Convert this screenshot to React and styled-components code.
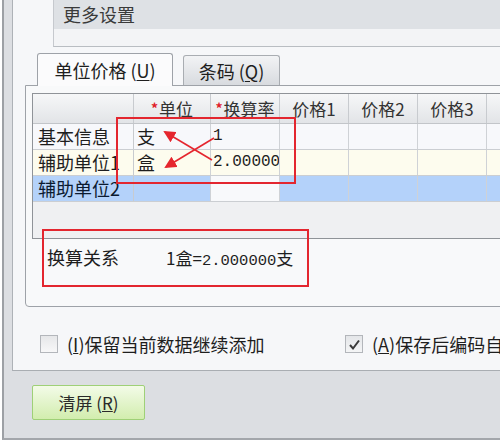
import styled, { createGlobalStyle } from 'styled-components'

const GlobalStyle = createGlobalStyle`
  html, body {
    margin: 0;
    padding: 0;
    background: #ffffff;
  }
  body {
    font-family: "Noto Sans CJK SC", "Liberation Sans", sans-serif;
    color: #1e1e1e;
  }
`

const columns = [
	{ key: 'unit', w: 77, title: '单位', required: true },
	{ key: 'rate', w: 69, title: '换算率', required: true },
	{ key: 'p1', w: 69, title: '价格1' },
	{ key: 'p2', w: 69, title: '价格2' },
	{ key: 'p3', w: 69, title: '价格3' },
	{ key: 'p4', w: 80, title: '' },
]

const rows = [
	{ name: '基本信息', bg: '#f7f8fb', unit: '支', rate: '1' },
	{ name: '辅助单位1', bg: '#fdfcee', unit: '盒', rate: '2.000000' },
	{ name: '辅助单位2', bg: '#b4d2fa', unit: '', rate: '', selected: true },
]

function App() {
	return (
		<S.Window>
			<GlobalStyle />
			<S.Frame>
				<S.Panel>
					<S.MoreBox>
						<S.MoreHeader>更多设置</S.MoreHeader>
					</S.MoreBox>

					<S.TabStrip>
						<S.Tab $active>
							单位价格 (<u>U</u>)
						</S.Tab>
						<S.Tab>
							条码 (<u>Q</u>)
						</S.Tab>
					</S.TabStrip>

					<S.TabPanel>
						<S.Grid>
							<S.HeadRow>
								<S.HeadCell $w={101} />
								{columns.map((c) => (
									<S.HeadCell key={c.key} $w={c.w}>
										{c.required && <S.Star>*</S.Star>}
										{c.title}
									</S.HeadCell>
								))}
							</S.HeadRow>
							{rows.map((r) => (
								<S.Row key={r.name} $bg={r.bg} $selected={r.selected}>
									<S.NameCell $w={101}>{r.name}</S.NameCell>
									{columns.map((c) => (
										<S.Cell
											key={c.key}
											$w={c.w}
											$mono={c.key === 'rate'}
											$plain={r.selected && c.key === 'rate'}
										>
											{r[c.key] || ''}
										</S.Cell>
									))}
								</S.Row>
							))}
						</S.Grid>

						<S.Summary>
							<S.SummaryLabel>换算关系</S.SummaryLabel>
							<S.SummaryValue>
								1盒=<S.Digits>2.000000</S.Digits>支
							</S.SummaryValue>
						</S.Summary>

						<S.Mark $left={90} $top={31} $w={180} $h={67} />
						<S.Mark $left={16} $top={143} $w={267} $h={58} />
						<S.Arrows width="260" height="120" viewBox="0 0 260 120">
							<defs>
								<marker
									id="head"
									viewBox="0 0 12 12"
									refX="10"
									refY="6"
									markerWidth="12"
									markerHeight="12"
									markerUnits="userSpaceOnUse"
									orient="auto"
								>
									<path d="M0 0 L12 6 L0 12 Z" fill="#e5262e" />
								</marker>
							</defs>
							<line x1="186" y1="74" x2="139" y2="46" stroke="#e5262e" strokeWidth="1.6" markerEnd="url(#head)" />
							<line x1="188" y1="52" x2="140" y2="81" stroke="#e5262e" strokeWidth="1.6" markerEnd="url(#head)" />
						</S.Arrows>
					</S.TabPanel>

					<S.CheckRow>
						<S.CheckItem $w={305}>
							<S.Box />
							<span>
								(<u>I</u>)保留当前数据继续添加
							</span>
						</S.CheckItem>
						<S.CheckItem>
							<S.Box $checked>
								<svg width="13" height="13" viewBox="0 0 13 13">
									<path d="M2 7 L5 10.5 L11 2.5" fill="none" stroke="#3a3a3a" strokeWidth="2" />
								</svg>
							</S.Box>
							<span>
								(<u>A</u>)保存后编码自动加一
							</span>
						</S.CheckItem>
					</S.CheckRow>
				</S.Panel>

				<S.Footer>
					<S.Button>
						清屏 (<u>R</u>)
					</S.Button>
				</S.Footer>
			</S.Frame>
		</S.Window>
	)
}

export default App

const Window = styled.div`
	width: 500px;
	height: 446px;
	overflow: hidden;
	background: #ffffff;
`

const Frame = styled.div`
	box-sizing: border-box;
	margin-left: 2px;
	width: 540px;
	height: 440px;
	padding-left: 8px;
	border-left: 2px solid #9da0a5;
	border-bottom: 2px solid #a3a6ab;
	background: #dcdee2;
	display: flex;
	flex-direction: column;
`

const Panel = styled.div`
	box-sizing: border-box;
	height: 371px;
	border-left: 1px solid #aeb2b7;
	border-bottom: 1px solid #a9adb2;
	background: #f6f7f9;
	display: flex;
	flex-direction: column;
`

const MoreBox = styled.div`
	box-sizing: border-box;
	margin-left: 40px;
	height: 47px;
	border-left: 1px solid #c6c9ce;
	border-bottom: 1px solid #b9bdc2;
	background: #f3f4f6;
`

const MoreHeader = styled.div`
	height: 29px;
	line-height: 29px;
	padding-left: 9px;
	background: #dee1e5;
	font-size: 18px;
	color: #3a3a3a;
`

const TabStrip = styled.div`
	display: flex;
	align-items: flex-end;
	gap: 10px;
	margin-top: 5px;
	padding-left: 24px;
	height: 33px;
	position: relative;
	z-index: 1;
`

const Tab = styled.div`
	box-sizing: border-box;
	width: ${(p) => (p.$active ? '136px' : '97px')};
	height: ${(p) => (p.$active ? '33px' : '30px')};
	margin-bottom: ${(p) => (p.$active ? '-1px' : '0')};
	border: 1px solid ${(p) => (p.$active ? '#9ea2a8' : '#a9adb2')};
	border-bottom: none;
	border-radius: 3px 3px 0 0;
	background: ${(p) =>
		p.$active ? '#fbfbfc' : 'linear-gradient(#f2f3f5, #d8dbdf)'};
	display: flex;
	align-items: center;
	justify-content: center;
	font-size: 18px;
	color: #1e1e1e;
	white-space: nowrap;
	u {
		text-underline-offset: 2px;
	}
`

const TabPanel = styled.div`
	box-sizing: border-box;
	position: relative;
	margin-left: 12px;
	height: 222px;
	padding: 7px 0 0 6px;
	border: 1px solid #9ea2a8;
	border-radius: 0 0 0 4px;
	background: #f8f9fa;
`

const Grid = styled.div`
	box-sizing: border-box;
	height: 146px;
	border: 1px solid #8f9398;
	background: #eff0f2;
	display: flex;
	flex-direction: column;
`

const HeadRow = styled.div`
	display: flex;
	height: 29px;
	border-bottom: 1px solid #c2c5c9;
	background: linear-gradient(#f6f7f8, #e2e4e7);
`

const HeadCell = styled.div`
	box-sizing: border-box;
	flex: 0 0 ${(p) => p.$w}px;
	border-right: 1px solid #c8cbcf;
	display: flex;
	align-items: center;
	justify-content: center;
	font-size: 17px;
	color: #333;
	white-space: nowrap;
`

const Star = styled.span`
	color: #e0202a;
	font-size: 14px;
	font-weight: bold;
	margin-right: 1px;
	position: relative;
	top: -1px;
`

const Row = styled.div`
	display: flex;
	height: 25px;
	border-bottom: 1px solid #cbced2;
	background: ${(p) => p.$bg};
	color: ${(p) => (p.$selected ? '#0b1a30' : '#1e1e1e')};
`

const NameCell = styled.div`
	box-sizing: border-box;
	flex: 0 0 ${(p) => p.$w}px;
	padding-left: 5px;
	border-right: 1px solid #c8cbcf;
	font-size: 18px;
	line-height: 25px;
	white-space: nowrap;
	overflow: hidden;
`

const Cell = styled.div`
	box-sizing: border-box;
	flex: 0 0 ${(p) => p.$w}px;
	padding-left: ${(p) => (p.$mono ? '2px' : '3px')};
	border-right: 1px solid #cfd2d6;
	background: ${(p) => (p.$plain ? '#f8f9fb' : 'transparent')};
	font-family: ${(p) =>
		p.$mono ? '"Liberation Mono", monospace' : '"Noto Sans CJK SC", sans-serif'};
	font-size: ${(p) => (p.$mono ? '16px' : '18px')};
	line-height: 25px;
	white-space: nowrap;
	overflow: hidden;
`

const Summary = styled.div`
	display: flex;
	align-items: center;
	margin-top: 7px;
	padding-left: 15px;
	height: 22px;
	font-size: 17px;
`

const SummaryLabel = styled.span`
	width: 119px;
	font-size: 18px;
`

const SummaryValue = styled.span`
	font-size: 17px;
	white-space: nowrap;
`

const Digits = styled.span`
	font-family: "Liberation Mono", monospace;
	font-size: 15.5px;
`

const Mark = styled.div`
	position: absolute;
	left: ${(p) => p.$left}px;
	top: ${(p) => p.$top}px;
	width: ${(p) => p.$w}px;
	height: ${(p) => p.$h}px;
	box-sizing: border-box;
	border: 2px solid #e3262f;
	pointer-events: none;
`

const Arrows = styled.svg`
	position: absolute;
	left: 0;
	top: 0;
	pointer-events: none;
`

const CheckRow = styled.div`
	display: flex;
	align-items: center;
	margin-top: 27px;
	padding-left: 27px;
	height: 20px;
	font-size: 18px;
	white-space: nowrap;
`

const CheckItem = styled.label`
	display: flex;
	align-items: center;
	gap: 9px;
	flex: 0 0 ${(p) => (p.$w ? `${p.$w}px` : 'auto')};
`

const Box = styled.span`
	box-sizing: border-box;
	flex: 0 0 18px;
	height: 18px;
	border: 1px solid #b3b6bb;
	background: ${(p) =>
		p.$checked ? 'linear-gradient(#e4e6e9, #f4f5f6)' : 'linear-gradient(#e6e7e9, #f7f7f8)'};
	display: flex;
	align-items: center;
	justify-content: center;
`

const Footer = styled.div`
	flex: 1;
	padding: 14px 0 0 20px;
`

const Button = styled.div`
	box-sizing: border-box;
	width: 113px;
	height: 35px;
	border: 1px solid #9fd077;
	border-radius: 2px;
	background: linear-gradient(#f3fbe8, #d2edae);
	display: flex;
	align-items: center;
	justify-content: center;
	font-size: 17px;
	color: #2a2a2a;
`

const S = {
	Window,
	Frame,
	Panel,
	MoreBox,
	MoreHeader,
	TabStrip,
	Tab,
	TabPanel,
	Grid,
	HeadRow,
	HeadCell,
	Star,
	Row,
	NameCell,
	Cell,
	Summary,
	SummaryLabel,
	SummaryValue,
	Digits,
	Mark,
	Arrows,
	CheckRow,
	CheckItem,
	Box,
	Footer,
	Button,
}
